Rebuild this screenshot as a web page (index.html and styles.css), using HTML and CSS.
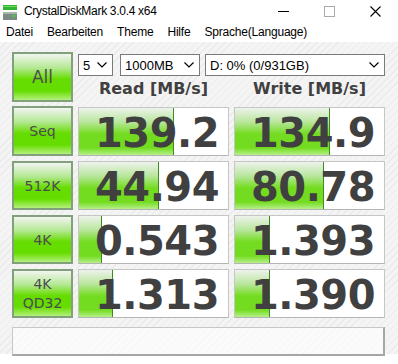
FILE: index.html
```html
<!DOCTYPE html>
<html lang="de">
<head>
  <meta charset="UTF-8">
  <title>CrystalDiskMark 3.0.4 x64</title>
  <link rel="stylesheet" href="styles.css">
</head>
<body>
  <!-- Title bar -->
  <div class="titlebar">
    <svg class="app-icon" width="14" height="15" viewBox="0 0 14 15">
      <rect x="0" y="0" width="14" height="5" fill="#2fb52f"/>
      <rect x="0" y="1" width="14" height="1" fill="#6fdc5f"/>
      <rect x="0" y="7" width="14" height="8" fill="#7c8c84"/>
      <rect x="0" y="7" width="14" height="2" fill="#a9b6ae"/>
      <rect x="9" y="10" width="3" height="2" fill="#3fd03f"/>
    </svg>
    <span class="title">CrystalDiskMark 3.0.4 x64</span>
    <div class="win-controls">
      <svg width="11" height="11" viewBox="0 0 11 11"><line x1="0" y1="5.5" x2="11" y2="5.5" stroke="#000" stroke-width="1"/></svg>
      <svg width="11" height="11" viewBox="0 0 11 11"><rect x="0.5" y="0.5" width="10" height="10" fill="none" stroke="#aaa" stroke-width="1"/></svg>
      <svg width="11" height="11" viewBox="0 0 11 11"><path d="M0.5 0.5 L10.5 10.5 M10.5 0.5 L0.5 10.5" stroke="#000" stroke-width="1.1"/></svg>
    </div>
  </div>

  <!-- Menu -->
  <div class="menubar">
    <span>Datei</span>
    <span>Bearbeiten</span>
    <span>Theme</span>
    <span>Hilfe</span>
    <span>Sprache(Language)</span>
  </div>

  <div class="main">
    <div class="grid">
      <div class="btn btn-all">All</div>
      <div class="head">
        <div class="selects">
          <div class="combo combo-count">5<svg class="chev" width="10" height="6" viewBox="0 0 10 6"><path d="M0.5 0.5 L5 5 L9.5 0.5" fill="none" stroke="#000" stroke-width="1.2"/></svg></div>
          <div class="combo combo-size">1000MB<svg class="chev" width="10" height="6" viewBox="0 0 10 6"><path d="M0.5 0.5 L5 5 L9.5 0.5" fill="none" stroke="#000" stroke-width="1.2"/></svg></div>
          <div class="combo combo-drive">D: 0% (0/931GB)<svg class="chev" width="10" height="6" viewBox="0 0 10 6"><path d="M0.5 0.5 L5 5 L9.5 0.5" fill="none" stroke="#000" stroke-width="1.2"/></svg></div>
        </div>
        <div class="col-titles">
          <span>Read [MB/s]</span>
          <span>Write [MB/s]</span>
        </div>
      </div>

      <div class="btn">Seq</div>
      <div class="cell"><div class="bar" style="width:94px"></div><span class="val">139.2</span></div>
      <div class="cell"><div class="bar" style="width:94px"></div><span class="val">134.9</span></div>

      <div class="btn btn-small">512K</div>
      <div class="cell"><div class="bar" style="width:79px"></div><span class="val">44.94</span></div>
      <div class="cell"><div class="bar" style="width:88px"></div><span class="val">80.78</span></div>

      <div class="btn btn-small">4K</div>
      <div class="cell"><div class="bar" style="width:22px"></div><span class="val">0.543</span></div>
      <div class="cell"><div class="bar" style="width:34px"></div><span class="val">1.393</span></div>

      <div class="btn btn-small btn-two">4K<br>QD32</div>
      <div class="cell"><div class="bar" style="width:33px"></div><span class="val">1.313</span></div>
      <div class="cell"><div class="bar" style="width:34px"></div><span class="val">1.390</span></div>
    </div>

    <div class="comment"></div>
  </div>
</body>
</html>
```

FILE: styles.css
```css
/* General */
body {
  margin: 0;
  width: 398px;
  height: 364px;
  overflow: hidden;
  background: #ffffff;
  font-family: "Liberation Sans", Arial, sans-serif;
  color: #000;
}

/* Title bar */
.titlebar {
  height: 21px;
  display: flex;
  align-items: center;
  background: #ffffff;
}

.app-icon {
  margin-left: 3px;
  margin-top: 3px;
}

.title {
  margin-left: 7px;
  font-size: 12px;
  letter-spacing: -0.3px;
  margin-top: 1px;
}

.win-controls {
  margin-left: auto;
  display: flex;
  align-items: center;
  gap: 35px;
  margin-right: 17px;
  margin-top: 1px;
}

/* Menu */
.menubar {
  height: 21px;
  display: flex;
  align-items: center;
  gap: 14px;
  padding-left: 6px;
  font-size: 12px;
  letter-spacing: -0.2px;
  background: #ffffff;
}

/* Main area */
.main {
  height: 302px;
  padding: 10px 13px 0 12px;
  background-color: #f4f4f4;
  background-image: repeating-linear-gradient(135deg, #f4f4f4 0px, #f4f4f4 4px, #ebebeb 4px, #ebebeb 5px);
}

.grid {
  display: grid;
  grid-template-columns: 61px 151px 151px;
  grid-template-rows: 50px 49px 49px 49px 49px;
  column-gap: 5px;
  row-gap: 5px;
}

.grid .btn:nth-child(3) {
  margin-top: -1px;
}

/* Green buttons */
.btn {
  box-sizing: border-box;
  border: 2px solid #82a07c;
  background: linear-gradient(to bottom, #f2f5f0 0%, #b4e894 30%, #66dd00 55%, #66dd00 80%, #b4f07c 100%);
  display: flex;
  align-items: center;
  justify-content: center;
  text-align: center;
  font-family: "DejaVu Sans", Verdana, sans-serif;
  font-size: 14px;
  color: #4c4c4c;
}

.btn-all {
  font-size: 17px;
}

.btn-small {
  font-size: 14px;
}

.btn-two {
  line-height: 19px;
}

/* Header */
.head {
  grid-column: 2 / 4;
  display: flex;
  flex-direction: column;
}

.selects {
  display: flex;
  margin-top: 2px;
  height: 22px;
}

.combo {
  box-sizing: border-box;
  height: 22px;
  border: 1px solid #7a7a7a;
  background: #ffffff;
  display: flex;
  align-items: center;
  justify-content: space-between;
  padding: 0 5px 0 4px;
  font-family: "Liberation Sans", Arial, sans-serif;
  font-size: 13px;
}

.combo-count {
  width: 35px;
  margin-right: 7px;
}

.combo-size {
  width: 80px;
  margin-right: 5px;
}

.combo-drive {
  width: 180px;
}

.col-titles {
  display: flex;
  margin-top: 3px;
}

.col-titles span {
  width: 151px;
  text-align: center;
  font-family: "DejaVu Sans", Verdana, sans-serif;
  font-weight: bold;
  font-size: 16px;
  color: #404040;
}

.col-titles span + span {
  margin-left: 5px;
}

/* Result cells */
.cell {
  position: relative;
  box-sizing: border-box;
  border: 1px solid #c6c6c6;
  border-bottom-color: #b4b4b4;
  background: #ffffff;
  display: flex;
  align-items: center;
  justify-content: flex-end;
  padding-right: 9px;
}

.bar {
  position: absolute;
  left: 0;
  top: 0;
  bottom: 0;
  background: linear-gradient(to bottom, #eef3ec 0%, #b8e69c 30%, #74dc20 55%, #74dc20 85%, #b6f08a 100%);
  border-right: 1px solid #3f8a22;
}

.val {
  position: relative;
  font-family: "DejaVu Sans", Verdana, sans-serif;
  font-weight: bold;
  font-size: 40px;
  letter-spacing: -0.5px;
  color: #404040;
  line-height: 1;
  margin-top: 2px;
}

/* Comment box */
.comment {
  box-sizing: border-box;
  margin-top: 9px;
  width: 373px;
  height: 29px;
  border: 1px solid #c8c8c8;
  border-right: 2px solid #a6a6a6;
  border-bottom: 2px solid #a6a6a6;
  background: rgba(255, 255, 255, 0.6);
}
```
